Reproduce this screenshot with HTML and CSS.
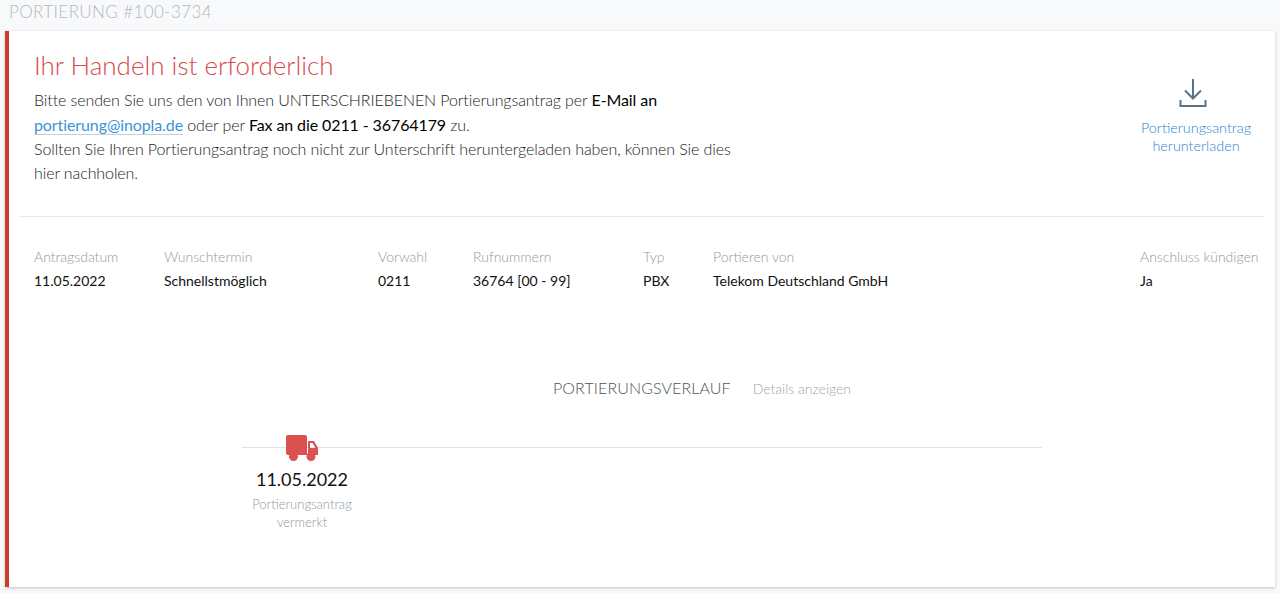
FILE: index.html
```html
<!DOCTYPE html>
<html lang="de">
<head>
    <meta charset="utf-8">
    <title>Portierung #100-3734</title>
    <link rel="stylesheet" href="styles.css">
</head>
<body>
    <h1 class="page-title">PORTIERUNG #100-3734</h1>

    <div class="card">
        <div class="notice">
            <div class="notice-text">
                <h2>Ihr Handeln ist erforderlich</h2>
                <p>Bitte senden Sie uns den von Ihnen UNTERSCHRIEBENEN Portierungsantrag per <b>E-Mail an</b>
                <a class="mail" href="#">portierung@inopla.de</a> oder per <b>Fax an die 0211 - 36764179</b> zu.<br>
                Sollten Sie Ihren Portierungsantrag noch nicht zur Unterschrift heruntergeladen haben, können Sie dies hier nachholen.</p>
            </div>
            <a class="download" href="#">
                <svg width="28" height="30" viewBox="0 0 28 30" fill="none" stroke="#5a7389" stroke-width="2">
                    <path d="M14 1V20M6 12.500L14 20.500L22 12.500"/>
                    <path d="M1.500 22V28H26.500V22"/>
                </svg>
                <span>Portierungsantrag herunterladen</span>
            </a>
        </div>

        <div class="facts">
            <div><span>Antragsdatum</span><b>11.05.2022</b></div>
            <div><span>Wunschtermin</span><b>Schnellstmöglich</b></div>
            <div><span>Vorwahl</span><b>0211</b></div>
            <div><span>Rufnummern</span><b>36764 [00 - 99]</b></div>
            <div><span>Typ</span><b>PBX</b></div>
            <div><span>Portieren von</span><b>Telekom Deutschland GmbH</b></div>
            <div><span>Anschluss kündigen</span><b>Ja</b></div>
        </div>

        <div class="history-head">
            <span class="history-title">PORTIERUNGSVERLAUF</span>
            <a class="history-link" href="#">Details anzeigen</a>
        </div>

        <div class="timeline">
            <div class="step">
                <svg class="truck" width="33" height="27" viewBox="0 0 33 27" fill="#dd5050">
                    <path d="M2 0H19Q21 0 21 2V20H2Q0 20 0 18V2Q0 0 2 0Z"/>
                    <path d="M22 6H28L32 13V20H22ZM24 8V13H29.500L26.500 8Z" fill-rule="evenodd"/>
                    <circle cx="7.500" cy="21.500" r="4.500"/>
                    <circle cx="25" cy="21.500" r="4.500"/>
                </svg>
                <div class="step-date">11.05.2022</div>
                <div class="step-label">Portierungsantrag vermerkt</div>
            </div>
        </div>
    </div>
</body>
</html>
```

FILE: styles.css
```css
html, body {
    margin: 0;
    height: 593px;
    overflow: hidden;
    background: #f8f9fb;
    font-family: "Lato", "Open Sans", sans-serif;
}
.page-title {
    margin: 0;
    height: 31px;
    padding-left: 9px;
    font-size: 17px;
    font-weight: 300;
    line-height: 24px;
    letter-spacing: 0.4px;
    color: #b4b8bc;
}
.card {
    box-sizing: border-box;
    height: 556px;
    margin: 0 5px 0 5px;
    background: #fff;
    border-left: 4px solid #c93b2b;
    box-shadow: 0 1px 3px rgba(0, 0, 0, 0.22);
}
.notice {
    display: flex;
    justify-content: space-between;
    height: 186px;
    margin: 0 10px;
    padding: 17px 0 0 15px;
    box-sizing: border-box;
    border-bottom: 1px solid #e6e8ea;
}
.notice-text {
    width: 720px;
}
.notice-text h2 {
    margin: 0;
    font-size: 26px;
    font-weight: 300;
    line-height: 35px;
    color: #d9484a;
}
.notice-text p {
    margin: 5.300px 0 0;
    font-size: 16px;
    font-weight: 300;
    line-height: 24.300px;
    letter-spacing: -0.1px;
    color: #222;
}
.notice-text b {
    font-weight: 400;
    color: #000;
}
.mail {
    color: #3c93d6;
    font-weight: 400;
    text-decoration: none;
    border-bottom: 1px solid #c5cdd5;
}
.download {
    display: flex;
    flex-direction: column;
    align-items: center;
    width: 120px;
    margin: 30px 9px 0 0;
    font-size: 14.400px;
    font-weight: 300;
    line-height: 18px;
    text-align: center;
    text-decoration: none;
    color: #2a85d0;
}
.download svg {
    margin: 0 6px 11px 0;
}
.facts {
    display: grid;
    grid-template-columns: 130px 214px 95px 170px 70px 427px auto;
    margin: 31px 0 0 25px;
    font-size: 14px;
}
.facts span, .facts b {
    display: block;
    white-space: nowrap;
}
.facts span {
    font-weight: 300;
    line-height: 18px;
    color: #8d99a6;
}
.facts b {
    margin-top: 6px;
    font-weight: 400;
    line-height: 18px;
    color: #111;
}
.history-head {
    display: flex;
    align-items: baseline;
    gap: 22px;
    margin: 88px 0 0 544px;
}
.history-title {
    font-size: 16px;
    font-weight: 300;
    letter-spacing: 0.1px;
    color: #4a5560;
}
.history-link {
    font-size: 14px;
    font-weight: 300;
    color: #9aa5b0;
    text-decoration: none;
}
.timeline {
    position: relative;
    width: 800px;
    margin: 38px 0 0 233px;
}
.timeline::before {
    content: "";
    position: absolute;
    top: 12px;
    left: 0;
    right: 0;
    height: 1px;
    background: #dfe3e6;
}
.step {
    position: relative;
    width: 120px;
    text-align: center;
}
.truck {
    display: block;
    margin: 0 auto;
}
.step-date {
    margin-top: 5px;
    font-size: 18px;
    line-height: 24px;
    color: #111;
}
.step-label {
    margin-top: 4px;
    font-size: 13px;
    font-weight: 300;
    line-height: 18px;
    color: #8d99a6;
}
```
